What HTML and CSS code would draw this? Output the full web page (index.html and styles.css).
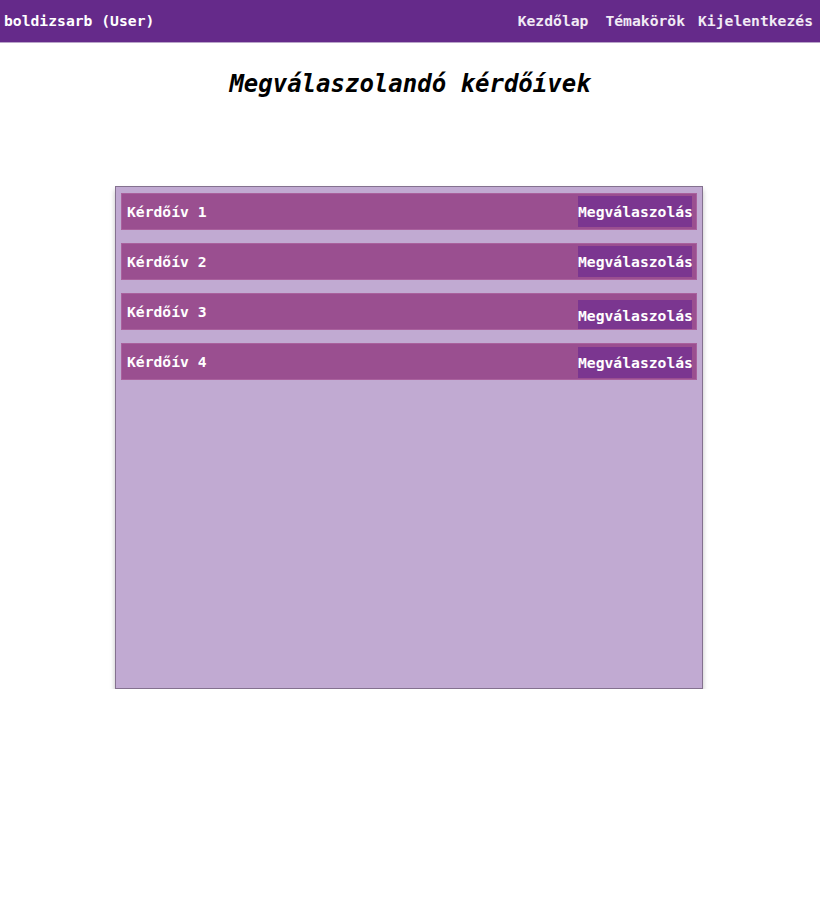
FILE: index.html
```html
<!DOCTYPE html>
<html lang="hu">
<head>
<meta charset="utf-8">
<title>Megválaszolandó kérdőívek</title>
<link rel="stylesheet" href="styles.css">
</head>
<body>
<header class="topbar">
  <div class="user">boldizsarb (User)</div>
  <nav class="nav">
    <a href="#" class="nav-link nav-home">Kezdőlap</a>
    <a href="#" class="nav-link">Témakörök</a>
    <a href="#" class="nav-link">Kijelentkezés</a>
  </nav>
</header>
<main class="content">
  <h1 class="title">Megválaszolandó kérdőívek</h1>
  <section class="panel">
    <div class="row"><span class="row-name">Kérdőív 1</span><button class="answer">Megválaszolás</button></div>
    <div class="row"><span class="row-name">Kérdőív 2</span><button class="answer">Megválaszolás</button></div>
    <div class="row"><span class="row-name">Kérdőív 3</span><button class="answer answer-low">Megválaszolás</button></div>
    <div class="row"><span class="row-name">Kérdőív 4</span><button class="answer answer-mid">Megválaszolás</button></div>
  </section>
</main>
</body>
</html>
```
FILE: styles.css
```css
* { box-sizing: border-box; }
body {
  margin: 0;
  background: #ffffff;
  font-family: "DejaVu Sans Mono", "Liberation Mono", monospace;
  font-weight: bold;
  font-size: 14.7px;
  color: #000;
}
.topbar {
  height: 43px;
  background: #652a8a;
  border-bottom: 1px solid #b9a4c9;
  display: flex;
  align-items: center;
  justify-content: space-between;
  padding: 0 7px 1px 4px;
  color: #fff;
}
.nav { display: flex; gap: 13px; }
.nav-link { color: #f1ebf5; text-decoration: none; }
.nav-home { margin-right: 4px; }
.user { color: #fff; }
.content {
  display: flex;
  flex-direction: column;
  align-items: center;
}
.title {
  margin: 27px 0 0 0;
  height: 29px;
  line-height: 29px;
  font-size: 24px;
  font-style: italic;
  font-weight: bold;
}
.panel {
  margin-top: 87px;
  margin-right: 2px;
  width: 588px;
  height: 503px;
  background: #c1aad2;
  border: 1px solid #84718f;
  box-shadow: 0 4px 5px rgba(0,0,0,0.25);
  padding: 6px 5px;
  display: flex;
  flex-direction: column;
  gap: 13px;
}
.row {
  height: 37px;
  background: #9a4f90;
  outline: 1px solid #a9619d;
  outline-offset: -1px;
  display: flex;
  align-items: center;
  justify-content: space-between;
  padding: 0 5px 0 6px;
  color: #fff;
}
.row-name { padding-bottom: 1px; }
.answer {
  font: inherit;
  color: #fff;
  background: #7b3690;
  border: none;
  height: 31px;
  width: 114px;
  padding: 0;
  text-align: left;
  margin-top: -1px;
}
.answer-low { margin-top: 7px; height: 30px; }
.answer-mid { margin-top: 2px; }
```
